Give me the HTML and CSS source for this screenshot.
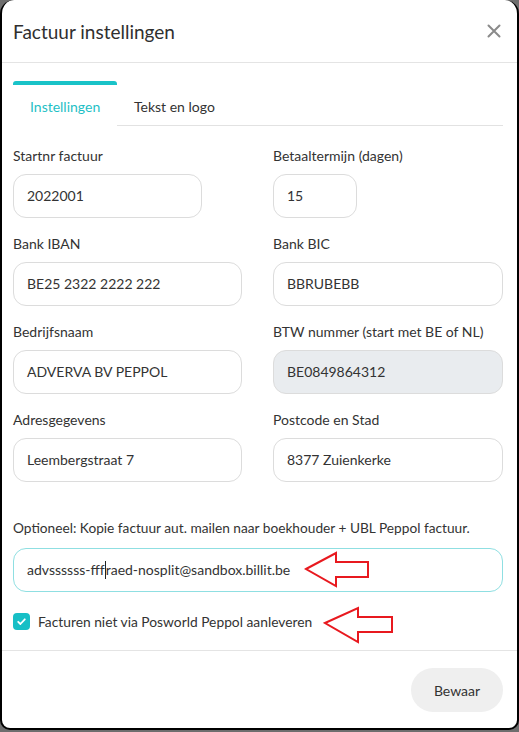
FILE: index.html
```html
<!DOCTYPE html>
<html lang="nl">
<head>
<meta charset="utf-8">
<title>Factuur instellingen</title>
<link rel="stylesheet" href="styles.css">
</head>
<body>
<div class="modal">
  <div class="header">
    <h1 class="title">Factuur instellingen</h1>
    <span class="close">
      <svg width="14" height="14" viewBox="0 0 14 14"><path d="M1.5 1.5L12.5 12.5M12.5 1.5L1.5 12.5" stroke="#8a8a8a" stroke-width="2" stroke-linecap="round"/></svg>
    </span>
  </div>
  <div class="content">
    <div class="tabs">
      <div class="tab active">Instellingen</div>
      <div class="tab rest">Tekst en logo</div>
    </div>
    <div class="grid">
      <div class="field">
        <label class="label">Startnr factuur</label>
        <div class="input w-start">2022001</div>
      </div>
      <div class="field">
        <label class="label">Betaaltermijn (dagen)</label>
        <div class="input w-days">15</div>
      </div>
      <div class="field">
        <label class="label">Bank IBAN</label>
        <div class="input">BE25 2322 2222 222</div>
      </div>
      <div class="field">
        <label class="label">Bank BIC</label>
        <div class="input">BBRUBEBB</div>
      </div>
      <div class="field">
        <label class="label">Bedrijfsnaam</label>
        <div class="input">ADVERVA BV PEPPOL</div>
      </div>
      <div class="field">
        <label class="label">BTW nummer (start met BE of NL)</label>
        <div class="input disabled">BE0849864312</div>
      </div>
      <div class="field">
        <label class="label">Adresgegevens</label>
        <div class="input">Leembergstraat 7</div>
      </div>
      <div class="field">
        <label class="label">Postcode en Stad</label>
        <div class="input">8377 Zuienkerke</div>
      </div>
    </div>
    <div class="optional">
      <label class="label small">Optioneel: Kopie factuur aut. mailen naar boekhouder + UBL Peppol factuur.</label>
      <div class="input focus">advssssss-fff<span class="caret"></span>raed-nosplit@sandbox.billit.be</div>
    </div>
    <div class="check-row">
      <span class="checkbox">
        <svg width="11" height="11" viewBox="0 0 11 11"><path d="M2.2 5.8L4.4 8L8.8 3.3" fill="none" stroke="#fff" stroke-width="1.8" stroke-linecap="round" stroke-linejoin="round"/></svg>
      </span>
      <span class="check-label">Facturen niet via Posworld Peppol aanleveren</span>
    </div>
  </div>
  <div class="footer">
    <button class="btn">Bewaar</button>
  </div>
  <svg class="arrow arrow-1" width="70" height="40" viewBox="0 0 70 40"><polygon points="2,18 32,2 32,11 64,11 64,26 32,26 32,35" fill="#fff" stroke="#e8191f" stroke-width="2" stroke-linejoin="miter"/></svg>
  <svg class="arrow arrow-2" width="74" height="40" viewBox="0 0 74 40"><polygon points="2,17 35,2 35,11 69,11 69,26 35,26 35,36" fill="#fff" stroke="#e8191f" stroke-width="2" stroke-linejoin="miter"/></svg>
</div>
</body>
</html>
```
FILE: styles.css
```css
* { box-sizing: border-box; }
html, body { margin: 0; padding: 0; }
body {
  background: #6e6e6e;
  width: 519px;
  height: 732px;
  overflow: hidden;
  font-family: Lato, "Noto Sans", sans-serif;
  color: #333;
}
.modal {
  position: relative;
  width: 519px;
  height: 730px;
  background: #fff;
  border: 2px solid #000;
  border-top: none;
  border-radius: 14px 14px 10px 10px;
  display: flex;
  flex-direction: column;
}
.header {
  height: 63px;
  flex: none;
  display: flex;
  align-items: center;
  justify-content: space-between;
  padding: 0 16px 0 11px;
  border-bottom: 1px solid #e4e4e4;
}
.title {
  margin: 0;
  font-size: 19px;
  font-weight: 400;
  color: #2f2f2f;
  padding-top: 1px;
}
.close { display: flex; }
.content {
  flex: 1;
  padding: 18px 14px 0 11px;
}
.tabs {
  display: flex;
  height: 45px;
}
.tab {
  font-size: 14px;
  padding: 16px 0 0 17px;
  line-height: 20px;
  color: #333;
}
.tab.active {
  width: 104px;
  color: #1fbfc6;
  border-top: 4px solid #19c3c8;
  border-radius: 3px;
  padding-top: 12px;
}
.tab.rest {
  flex: 1;
  border-bottom: 1px solid #e2e2e2;
}
.grid {
  margin-top: 20px;
  display: grid;
  grid-template-columns: 229px 230px;
  column-gap: 31px;
  row-gap: 16px;
}
.field { display: flex; flex-direction: column; align-items: flex-start; }
.label {
  display: block;
  font-size: 14px;
  line-height: 20px;
  height: 20px;
  margin-bottom: 8px;
  color: #333;
  white-space: nowrap;
}
.label.small { font-size: 13.7px; }
.input {
  width: 100%;
  height: 44px;
  border: 1px solid #dcdcdc;
  border-radius: 13px;
  padding: 0 13px;
  font-size: 14px;
  line-height: 42px;
  color: #333;
  white-space: nowrap;
}
.input.w-start { width: 189px; }
.input.w-days { width: 84px; }
.input.disabled { background: #e9ecef; }
.optional {
  margin-top: 36px;
}
.optional .label { margin-bottom: 10px; }
.input.focus { border-color: #8fdfe2; }
.caret {
  display: inline-block;
  width: 1px;
  height: 18px;
  background: #222;
  vertical-align: -4px;
}
.check-row {
  margin-top: 21px;
  display: flex;
  align-items: center;
  gap: 8px;
}
.checkbox {
  width: 17px;
  height: 17px;
  border-radius: 4px;
  background: #17bfc6;
  display: flex;
  align-items: center;
  justify-content: center;
}
.check-label { font-size: 13.8px; color: #333; }
.footer {
  height: 78px;
  flex: none;
  border-top: 1px solid #e4e4e4;
  display: flex;
  justify-content: flex-end;
  align-items: flex-start;
  padding: 17px 14px 0 0;
}
.btn {
  width: 92px;
  height: 44px;
  border: none;
  border-radius: 22px;
  background: #efefef;
  font-family: inherit;
  font-size: 14px;
  color: #333;
}
.arrow { position: absolute; }
.arrow-1 { left: 302px; top: 551px; }
.arrow-2 { left: 321px; top: 606px; }
```
